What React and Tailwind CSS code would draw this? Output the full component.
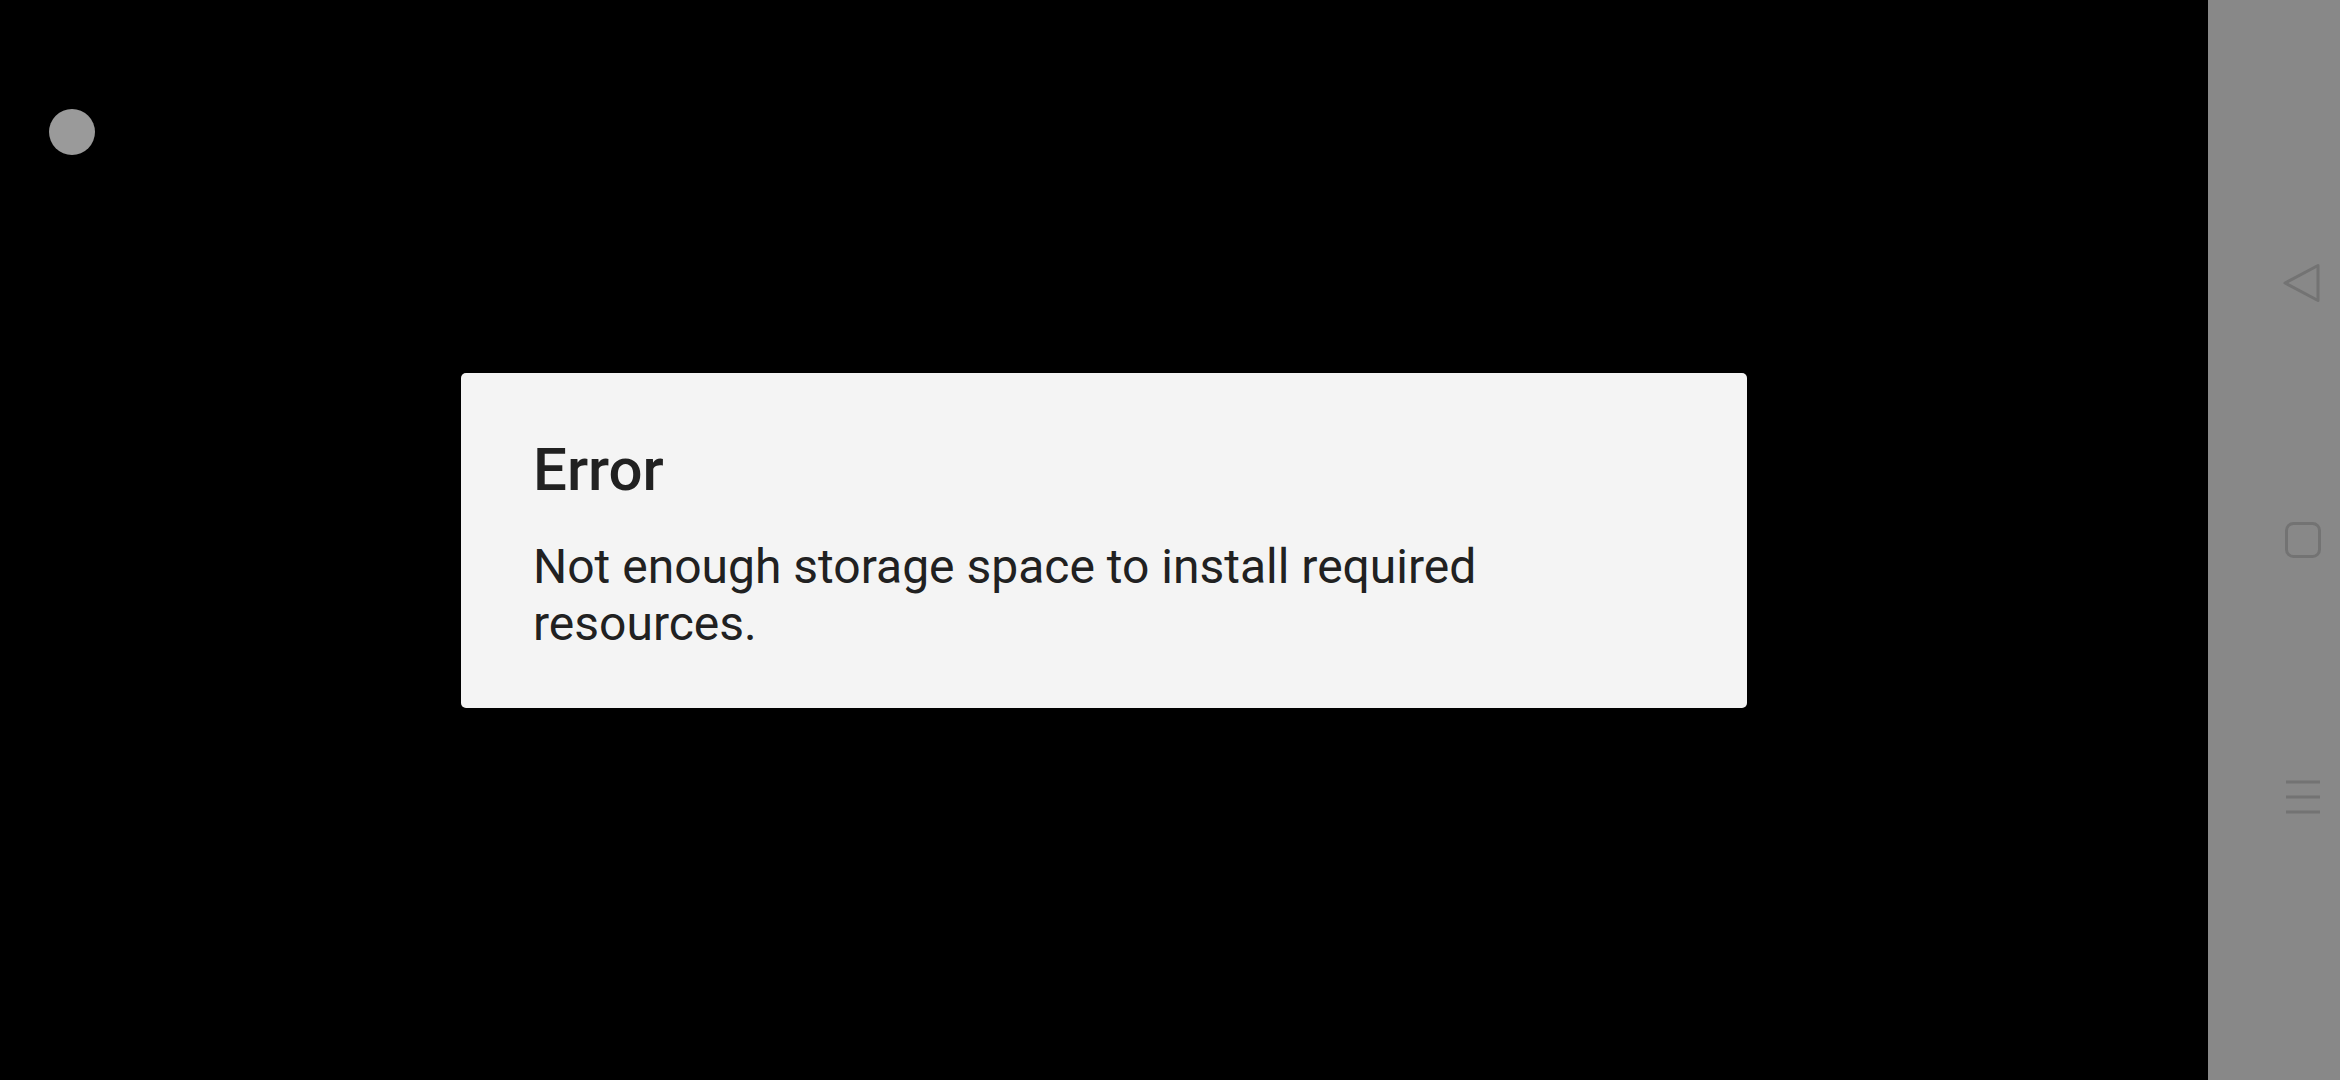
export default function App() {
  return (
    <div
      className="flex h-[1080px] w-[2340px] overflow-hidden"
      style={{ fontFamily: "Roboto, 'Noto Sans', sans-serif" }}
    >
      <div className="relative flex flex-1 items-center justify-center bg-black">
        <div className="absolute left-[49px] top-[109px] h-[46px] w-[46px] rounded-full bg-[#9a9a9a]" />
        <div className="w-[1286px] rounded-[5px] bg-[#f4f4f4] px-[72px] pb-[56px] pt-[62px] text-[#212121]">
          <h1 className="text-[60px] font-medium leading-[70px]">Error</h1>
          <p className="mt-[33px] text-[48px] leading-[57px]">
            Not enough storage space to install required
            <br />
            resources.
          </p>
        </div>
      </div>
      <div className="flex w-[132px] flex-col justify-center gap-[217px] bg-[#888888] pl-[74px]">
        <svg width="40" height="40" viewBox="0 0 40 40" fill="none">
          <path
            d="M3 20 L36 2.5 L36 37.5 Z"
            stroke="#737373"
            strokeWidth="3"
            strokeLinejoin="round"
          />
        </svg>
        <svg width="40" height="40" viewBox="0 0 40 40" fill="none">
          <rect x="4.5" y="3.5" width="33" height="33" rx="7" stroke="#737373" strokeWidth="3" />
        </svg>
        <svg width="40" height="40" viewBox="0 0 40 40" fill="none">
          <path d="M4 5 H38 M4 20 H38 M4 35 H38" stroke="#737373" strokeWidth="3" />
        </svg>
      </div>
    </div>
  );
}
